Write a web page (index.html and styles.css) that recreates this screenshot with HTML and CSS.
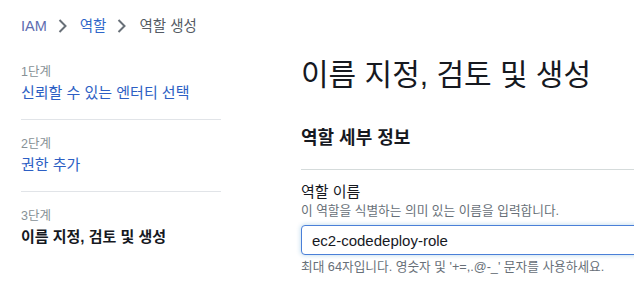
FILE: index.html
```html
<!DOCTYPE html>
<html lang="ko">
<head>
    <meta charset="UTF-8">
    <meta name="viewport" content="width=device-width, initial-scale=1.0">
    <title>역할 생성</title>
    <link rel="stylesheet" href="styles.css">
</head>
<body>
    <nav class="breadcrumbs">
        <a class="crumb crumb-root" href="#">IAM</a>
        <svg class="chevron" width="9" height="14" viewBox="0 0 9 14"><path d="M1.5 1 L7.5 7 L1.5 13" fill="none" stroke="#687078" stroke-width="2"/></svg>
        <a class="crumb" href="#">역할</a>
        <svg class="chevron" width="9" height="14" viewBox="0 0 9 14"><path d="M1.5 1 L7.5 7 L1.5 13" fill="none" stroke="#687078" stroke-width="2"/></svg>
        <span class="crumb crumb-current">역할 생성</span>
    </nav>

    <div class="layout">
        <ul class="steps">
            <li class="step">
                <div class="step-num">1단계</div>
                <a class="step-title" href="#">신뢰할 수 있는 엔터티 선택</a>
            </li>
            <li class="step">
                <div class="step-num">2단계</div>
                <a class="step-title" href="#">권한 추가</a>
            </li>
            <li class="step">
                <div class="step-num">3단계</div>
                <span class="step-title current">이름 지정, 검토 및 생성</span>
            </li>
        </ul>

        <main class="content">
            <h1 class="page-title">이름 지정, 검토 및 생성</h1>
            <section class="panel">
                <h2 class="panel-title">역할 세부 정보</h2>
                <div class="field">
                    <label class="field-label" for="roleName">역할 이름</label>
                    <div class="field-desc">이 역할을 식별하는 의미 있는 이름을 입력합니다.</div>
                    <input id="roleName" class="text-input" type="text" value="ec2-codedeploy-role">
                    <div class="field-hint">최대 64자입니다. 영숫자 및 '+=,.@-_' 문자를 사용하세요.</div>
                </div>
            </section>
        </main>
    </div>
</body>
</html>
```

FILE: styles.css
```css
body {
    margin: 0;
    padding: 0;
    background-color: #ffffff;
    color: #16191f;
    font-family: "Liberation Sans", "Noto Sans CJK KR", Arial, sans-serif;
    font-size: 15px;
    overflow: hidden;
}
a {
    text-decoration: none;
}
.breadcrumbs {
    display: flex;
    align-items: center;
    height: 20px;
    padding: 16px 0 0 21px;
}
.crumb {
    font-size: 14.5px;
    line-height: 20px;
}
a.crumb {
    color: #2f66c9;
}
a.crumb-root {
    color: #5d6cb0;
}
.crumb-current {
    color: #545b64;
}
.chevron {
    margin: 0 13px 0 11px;
}
.layout {
    display: flex;
    padding-left: 21px;
}
.steps {
    list-style: none;
    margin: 0;
    padding: 12px 0 0;
    width: 200px;
    flex-shrink: 0;
}
.step {
    padding: 15px 0 14px;
    border-bottom: 1px solid #e1e4e8;
}
.step:last-child {
    border-bottom: none;
}
.step-num {
    font-size: 12.5px;
    line-height: 18px;
    color: #879196;
}
.step-title {
    display: block;
    font-size: 15px;
    line-height: 24px;
    color: #2d5fc4;
}
.step-title.current {
    color: #16191f;
    font-weight: bold;
}
.content {
    flex: 1;
    margin-left: 80px;
    min-width: 600px;
}
.page-title {
    margin: 19px 0 0;
    font-size: 30px;
    font-weight: normal;
    line-height: 40px;
    color: #16191f;
}
.panel-title {
    margin: 30px 0 0;
    font-size: 18px;
    font-weight: bold;
    line-height: 26px;
    padding-bottom: 18px;
    border-bottom: 1px solid #d5dbdb;
}
.field {
    padding-top: 12px;
}
.field-label {
    display: block;
    font-size: 15px;
    line-height: 20px;
    color: #16191f;
}
.field-desc,
.field-hint {
    font-size: 12.7px;
    line-height: 18px;
    color: #687078;
}
.text-input {
    display: block;
    box-sizing: border-box;
    width: 600px;
    height: 30px;
    margin: 5px 0 3px;
    padding: 4px 10px;
    border: 1px solid #4a7fd8;
    border-radius: 4px;
    box-shadow: 0 0 4px 1px rgba(0, 115, 187, 0.2);
    font-family: "Liberation Sans", "Noto Sans CJK KR", Arial, sans-serif;
    font-size: 15px;
    color: #16191f;
    outline: none;
}
```
